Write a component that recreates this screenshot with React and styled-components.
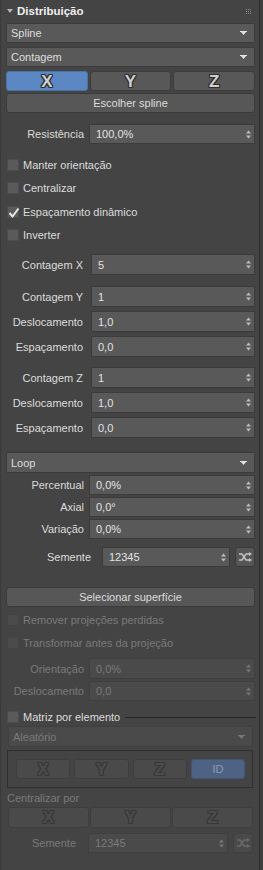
import React from "react";
import styled, { createGlobalStyle, css } from "styled-components";

const GlobalStyle = createGlobalStyle`
  html, body { margin: 0; padding: 0; background: #444444; }
  body { font-family: "Liberation Sans", Arial, sans-serif; font-size: 11px; color: #dcdcdc; }
  * { box-sizing: border-box; }
`;

const Root = styled.div`
  width: 263px;
  height: 870px;
  background: #3e3e3e;
  display: flex;
  overflow: hidden;
`;

const Panel = styled.div`
  width: 260px;
  height: 870px;
  background: #444444;
  border-left: 1px solid #3a3a3a;
  border-right: 1px solid #2c2c2c;
  padding: 0 4px 0 5px;
  display: flex;
  flex-direction: column;
`;

const Header = styled.div`
  height: 23px;
  display: flex;
  align-items: center;
  padding-bottom: 2px;
  margin: 0 -4px 0 -5px;
  padding-left: 6px;
  padding-right: 8px;
`;

const Title = styled.span`
  font-weight: bold;
  font-size: 11.5px;
  color: #f0f0f0;
  margin-left: 4px;
  flex: 1;
`;

const Grip = styled.div`
  display: grid;
  grid-template-columns: repeat(3, 1px);
  grid-template-rows: repeat(3, 1px);
  gap: 1px;
  margin-top: 1px;
  & > i { background: #8a8a8a; display: block; }
`;

const disabledControl = css`
  background: #4a4a4a;
  border-color: #3f3f3f;
  color: #7a7a7a;
`;

const Dropdown = styled.div`
  height: ${(p) => p.$h || 20}px;
  margin-top: ${(p) => p.$mt || 0}px;
  margin-left: ${(p) => p.$inset || 0}px;
  margin-right: ${(p) => p.$inset || 0}px;
  background: #595959;
  border: 1px solid #3b3b3b;
  border-radius: 1px;
  display: flex;
  align-items: center;
  padding: 0 7px 0 4px;
  color: #dedede;
  & > span { flex: 1; }
  ${(p) => p.$disabled && disabledControl}
`;

const Seg = styled.div`
  display: grid;
  grid-template-columns: repeat(${(p) => p.$cols || 3}, 1fr);
  gap: ${(p) => p.$gap ?? 2}px;
  margin-top: ${(p) => p.$mt || 0}px;
  margin-left: ${(p) => p.$inset || 0}px;
  margin-right: ${(p) => p.$inset || 0}px;
  height: ${(p) => p.$h || 20}px;
`;

const outline = (c) =>
  `-1px 0 ${c}, 1px 0 ${c}, 0 -1px ${c}, 0 1px ${c}, -1px -1px ${c}, 1px 1px ${c}, -1px 1px ${c}, 1px -1px ${c}`;

const SegButton = styled.div`
  background: ${(p) => (p.$active ? "#5b87c2" : "#585858")};
  border: 1px solid ${(p) => (p.$active ? "#4a73a8" : "#3c3c3c")};
  border-radius: 3px;
  display: flex;
  align-items: center;
  justify-content: center;
  font-weight: bold;
  font-size: 17px;
  color: #cfcfcf;
  text-shadow: ${outline("#2e2e2e")};
  line-height: 1;
  ${(p) =>
    p.$disabled &&
    css`
      background: ${p.$active ? "#4e6283" : "#4a4a4a"};
      border-color: ${p.$active ? "#435573" : "#3e3e3e"};
      color: #4c4c4c;
      text-shadow: ${outline("#383838")};
    `}
  ${(p) =>
    p.$plain &&
    css`
      font-weight: normal;
      font-size: 11px;
      color: #8f9db3;
      text-shadow: none;
    `}
`;

const Button = styled.div`
  height: 20px;
  margin-top: ${(p) => p.$mt || 0}px;
  background: #575757;
  border: 1px solid #3a3a3a;
  border-radius: 3px;
  display: flex;
  align-items: center;
  justify-content: center;
  color: #dcdcdc;
`;

const FieldRow = styled.div`
  display: grid;
  grid-template-columns: ${(p) => p.$labelW}px 1fr ${(p) => (p.$extra ? "auto" : "")};
  column-gap: ${(p) => (p.$extra ? 5 : 0)}px;
  height: ${(p) => p.$h || 20}px;
  margin-top: ${(p) => p.$mt || 0}px;
  margin-right: ${(p) => p.$inset || 0}px;
`;

const Label = styled.div`
  text-align: right;
  padding-right: ${(p) => p.$pad || 5}px;
  display: flex;
  align-items: center;
  justify-content: flex-end;
  white-space: nowrap;
  color: ${(p) => (p.$disabled ? "#7a7a7a" : "#dcdcdc")};
`;

const Spinner = styled.div`
  background: #595959;
  border: 1px solid #3b3b3b;
  display: flex;
  align-items: center;
  padding: 0 3px 0 6px;
  color: #e2e2e2;
  & > span { flex: 1; }
  ${(p) => p.$disabled && disabledControl}
`;

const IconButton = styled.div`
  width: 20px;
  background: #565656;
  border: 1px solid #3a3a3a;
  border-radius: 3px;
  display: flex;
  align-items: center;
  justify-content: center;
  ${(p) =>
    p.$disabled &&
    css`
      background: #4a4a4a;
      border-color: #404040;
    `}
`;

const CheckRow = styled.div`
  height: ${(p) => p.$h || 23.5}px;
  margin-top: ${(p) => p.$mt || 0}px;
  display: flex;
  align-items: center;
  padding-left: 1px;
  color: ${(p) => (p.$disabled ? "#7a7a7a" : "#dcdcdc")};
`;

const Box = styled.div`
  width: 12px;
  height: 12px;
  background: ${(p) => (p.$disabled ? "#4b4b4b" : "#5a5a5a")};
  border: 1px solid ${(p) => (p.$disabled ? "#444" : "#4c4c4c")};
  margin-right: 4px;
  position: relative;
  flex: none;
  & > svg { position: absolute; left: 0; top: 0; }
`;

const Line = styled.div`
  flex: 1;
  height: 1px;
  background: #262626;
  margin-left: 5px;
  margin-right: -1px;
`;

const Frame = styled.div`
  margin: 3px 2px 0 1px;
  height: 38px;
  border: 1px solid #2f2f2f;
  padding: 8px 7px 8px 8px;
`;

const Caption = styled.div`
  height: 16px;
  margin-top: 2px;
  padding-left: 1px;
  display: flex;
  align-items: center;
  color: #7a7a7a;
`;

const Arrow = ({ c = "#e4e4e4" }) => (
  <svg width="7" height="4" viewBox="0 0 7 4">
    <rect x="0" y="0" width="7" height="1" fill={c} />
    <polygon points="1,1 6,1 3.5,4" fill={c} />
  </svg>
);

const Spin = ({ c = "#bdbdbd" }) => (
  <svg width="5" height="9" viewBox="0 0 5 9">
    <polygon points="0,3.5 2.5,0.5 5,3.5" fill={c} />
    <polygon points="0,5.5 2.5,8.5 5,5.5" fill={c} />
  </svg>
);

const Shuffle = ({ c = "#c4c4c4" }) => (
  <svg width="13" height="10" viewBox="0 0 13 10" fill="none" stroke={c} strokeWidth="1.4">
    <path d="M0 2 H3 L7 8 H10" />
    <path d="M0 8 H3 L7 2 H10" />
    <polygon points="10,0 13,2 10,4" fill={c} stroke="none" />
    <polygon points="10,6 13,8 10,10" fill={c} stroke="none" />
  </svg>
);

const Check = () => (
  <svg width="12" height="12" viewBox="0 0 12 12">
    <path d="M1.5 6 L4.5 9.5 L10.5 1.5" stroke="#e8e8e8" strokeWidth="2" fill="none" />
  </svg>
);

const Drop = ({ children, ...rest }) => (
  <Dropdown {...rest}>
    <span>{children}</span>
    <Arrow c={rest.$disabled ? "#777" : "#e4e4e4"} />
  </Dropdown>
);

const Field = ({ label, value, labelW, pad, h, mt, disabled, shuffle, inset }) => (
  <FieldRow $labelW={labelW} $h={h} $mt={mt} $extra={shuffle} $inset={inset}>
    <Label $pad={pad} $disabled={disabled}>{label}</Label>
    <Spinner $disabled={disabled}>
      <span>{value}</span>
      <Spin c={disabled ? "#777" : "#bdbdbd"} />
    </Spinner>
    {shuffle && (
      <IconButton $disabled={disabled}>
        <Shuffle c={disabled ? "#6a6a6a" : "#c4c4c4"} />
      </IconButton>
    )}
  </FieldRow>
);

const Checkbox = ({ label, checked, mt, h, disabled }) => (
  <CheckRow $mt={mt} $h={h} $disabled={disabled}>
    <Box $disabled={disabled}>{checked && <Check />}</Box>
    {label}
  </CheckRow>
);

export default function App() {
  return (
    <>
      <GlobalStyle />
      <Root>
        <Panel>
          <Header>
            <svg width="6" height="4" viewBox="0 0 6 4">
              <polygon points="0,0 6,0 3,4" fill="#b4b4b4" />
            </svg>
            <Title>Distribuição</Title>
            <Grip>
              {Array.from({ length: 9 }).map((_, i) => (
                <i key={i} />
              ))}
            </Grip>
          </Header>

          <Drop>Spline</Drop>
          <Drop $mt={4}>Contagem</Drop>
          <Seg $mt={4}>
            <SegButton $active>X</SegButton>
            <SegButton>Y</SegButton>
            <SegButton>Z</SegButton>
          </Seg>
          <Button $mt={2}>Escolher spline</Button>

          <Field label="Resistência" value="100,0%" labelW={83} pad={5} mt={11} />

          <Checkbox label="Manter orientação" mt={9} />
          <Checkbox label="Centralizar" />
          <Checkbox label="Espaçamento dinâmico" checked />
          <Checkbox label="Inverter" />

          <Field label="Contagem X" value="5" labelW={85} pad={8} h={21} mt={7} />
          <Field label="Contagem Y" value="1" labelW={85} pad={8} h={21} mt={11} />
          <Field label="Deslocamento" value="1,0" labelW={85} pad={8} h={21} mt={4} />
          <Field label="Espaçamento" value="0,0" labelW={85} pad={8} h={21} mt={4} />
          <Field label="Contagem Z" value="1" labelW={85} pad={8} h={21} mt={10} />
          <Field label="Deslocamento" value="1,0" labelW={85} pad={8} h={21} mt={4} />
          <Field label="Espaçamento" value="0,0" labelW={85} pad={8} h={21} mt={4} />

          <Drop $mt={14} $h={21}>Loop</Drop>
          <Field label="Percentual" value="0,0%" labelW={83} pad={5} mt={2} />
          <Field label="Axial" value="0,0°" labelW={83} pad={5} mt={2} />
          <Field label="Variação" value="0,0%" labelW={83} pad={5} mt={2} />
          <Field label="Semente" value="12345" labelW={91} pad={6} mt={8} shuffle />

          <Button $mt={20}>Selecionar superfície</Button>
          <Checkbox label="Remover projeções perdidas" mt={1} h={23} disabled />
          <Checkbox label="Transformar antes da projeção" h={23} disabled />
          <Field label="Orientação" value="0,0%" labelW={83} pad={5} h={21} mt={4} disabled />
          <Field label="Deslocamento" value="0,0" labelW={83} pad={5} mt={2} disabled />

          <CheckRow $mt={8} $h={16}>
            <Box />
            Matriz por elemento
            <Line />
          </CheckRow>
          <Drop $mt={1} $h={21} $inset={2} $disabled>Aleatório</Drop>
          <Frame>
            <Seg $cols={4} $gap={4}>
              <SegButton $disabled>X</SegButton>
              <SegButton $disabled>Y</SegButton>
              <SegButton $disabled>Z</SegButton>
              <SegButton $disabled $active $plain>ID</SegButton>
            </Seg>
          </Frame>
          <Caption>Centralizar por</Caption>
          <Seg $mt={1} $h={21} $gap={1} $inset={2}>
            <SegButton $disabled>X</SegButton>
            <SegButton $disabled>Y</SegButton>
            <SegButton $disabled>Z</SegButton>
          </Seg>
          <Field label="Semente" value="12345" labelW={77} pad={7} mt={5} disabled shuffle inset={2} />
        </Panel>
      </Root>
    </>
  );
}
